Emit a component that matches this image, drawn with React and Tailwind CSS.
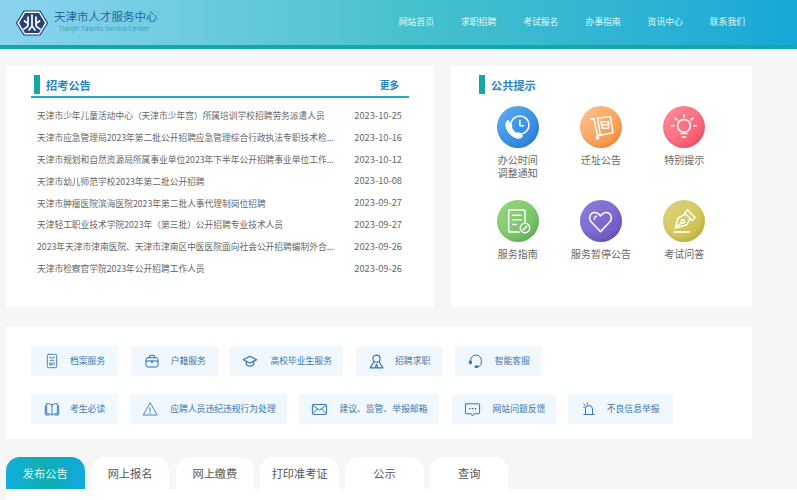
import React from "react";

const font = { fontFamily: '"Noto Sans CJK SC", "Noto Sans", sans-serif' };

const news = [
  ["天津市少年儿童活动中心（天津市少年宫）所属培训学校招聘劳务派遣人员", "2023-10-25"],
  ["天津市应急管理局2023年第二批公开招聘应急管理综合行政执法专职技术检...", "2023-10-16"],
  ["天津市规划和自然资源局所属事业单位2023年下半年公开招聘事业单位工作...", "2023-10-12"],
  ["天津市幼儿师范学校2023年第二批公开招聘", "2023-10-08"],
  ["天津市肿瘤医院滨海医院2023年第二批人事代理制岗位招聘", "2023-09-27"],
  ["天津轻工职业技术学院2023年（第三批）公开招聘专业技术人员", "2023-09-27"],
  ["2023年天津市津南医院、天津市津南区中医医院面向社会公开招聘编制外合...", "2023-09-26"],
  ["天津市检察官学院2023年公开招聘工作人员", "2023-09-26"],
];

const S = ({ children, size = 24, sw = 1.3, color = "white" }) => (
  <svg width={size} height={size} viewBox="0 0 24 24" fill="none" stroke={color} strokeWidth={sw} strokeLinecap="round" strokeLinejoin="round">
    {children}
  </svg>
);

const tips = [
  {
    label: ["办公时间", "调整通知"],
    bg: "bg-linear-to-br from-[#62b2ef] via-[#3f94e5] to-[#2a80e0]",
    icon: (
      <S size={29}>
        <circle cx="14" cy="10" r="7.500" />
        <path d="M14 6v4.500h3" />
        <path d="M4 6.500c-1.800 1.600-1.800 4-.6 6.700 1.700 3.500 4.700 6.300 7.900 7.300 2 .6 3.500 0 4.500-1.500l-3-2.500-1.800 1c-2.200-1-4-3-4.800-5.200l1-1.800z" fill="white" />
      </S>
    ),
  },
  {
    label: ["迁址公告"],
    bg: "bg-linear-to-br from-[#fcc493] via-[#fca865] to-[#fb8c2c]",
    icon: (
      <S size={28}>
        <path d="M3 5h3l3 14h3" />
        <path d="M9 4.500 20 3l2.200 14L11.500 19z" />
        <path d="M12 7.500h6.500v5.500H13zM13 10h5.500" />
        <circle cx="9" cy="21" r="1" />
      </S>
    ),
  },
  {
    label: ["特别提示"],
    bg: "bg-linear-to-br from-[#fb8c9a] via-[#fb7284] to-[#fa4560]",
    icon: (
      <S size={28}>
        <circle cx="12" cy="11" r="5.500" />
        <path d="M9.500 17.500h5M10.500 20.500h3M12 1.500v2M4.500 4.500l1.500 1.500M19.500 4.500 18 6M1.500 11h2M20.500 11h2" />
      </S>
    ),
  },
  {
    label: ["服务指南"],
    bg: "bg-linear-to-br from-[#95d67e] via-[#82cb6e] to-[#5fb25a]",
    icon: (
      <S size={28}>
        <path d="M13 21.500H5a1 1 0 0 1-1-1V3.500a1 1 0 0 1 1-1h12a1 1 0 0 1 1 1v9" />
        <path d="M7.500 7h7M7.500 11h7M7.500 15h3" />
        <circle cx="18" cy="18" r="4" />
        <path d="M16.500 19.500l3-3" />
      </S>
    ),
  },
  {
    label: ["服务暂停公告"],
    bg: "bg-linear-to-br from-[#8e7ddc] via-[#7e6cd2] to-[#6a4cb6]",
    icon: (
      <S size={27}>
        <path d="M12 21 3.800 12.500C1 9.500 2.500 4 7 4c2.500 0 3.800 1.500 5 3 1.200-1.500 2.500-3 5-3 4.500 0 6 5.500 3.200 8.500z" />
        <path d="M6.500 10c0-1.500.8-2.500 2-2.800" />
      </S>
    ),
  },
  {
    label: ["考试问答"],
    bg: "bg-linear-to-br from-[#dcd27e] via-[#d6ca62] to-[#c6b62c]",
    icon: (
      <S size={28}>
        <path d="M15 2.500 21.500 9 19 11.500 12.500 5z" />
        <path d="M13.500 6 7 9.500 4.500 18l9.500-2.500L17.500 10" />
        <circle cx="11" cy="12.500" r="1.500" />
        <path d="M5 17.500 10 13.500M3.500 21.500h13" />
      </S>
    ),
  },
];

const B = "#2f75b5";
const services = [
  [
    { t: "档案服务", w: "w-[87px]", pl: "pl-[13px]", gap: "gap-[10px]", i: <S size={16} color={B} sw={1.3}><rect x="5" y="2" width="14" height="20" rx="1.500" /><path d="M8 6l4 2 4-2M9 11h6M9 15h3v3H9zM15 14v4" /></S> },
    { t: "户籍服务", w: "w-[87px]", pl: "pl-[13px]", gap: "gap-[11px]", i: <S size={16} color={B} sw={1.5}><rect x="3" y="7" width="18" height="14" rx="3" /><path d="M8.500 7V3.500h7V7M3 12h18M11 12v2h2v-2" /></S> },
    { t: "高校毕业生服务", w: "w-[113px]", pl: "pl-[12px]", gap: "gap-[12px]", i: <S size={16} color={B} sw={1.8}><path d="M12 5 2 10l10 5 10-5zM6.500 13v4.500c3 3 8 3 11 0V13" /></S> },
    { t: "招聘求职", w: "w-[86px]", pl: "pl-[12px]", gap: "gap-[10px]", i: <S size={17} color={B} sw={1.6}><circle cx="12" cy="8" r="5" /><path d="M8 13 3 21h18l-5-8M10 21l2-5 2 5" /></S> },
    { t: "智能客服", w: "w-[87px]", pl: "pl-[13px]", gap: "gap-[11px]", i: <S size={16} color={B} sw={1.5}><path d="M4 13V11a8 8 0 0 1 16 0v4c0 3-2 5-5.500 5.500" /><rect x="2.500" y="12" width="2.500" height="4" fill={B} /><rect x="11" y="19.500" width="4" height="2" fill={B} /></S> },
  ],
  [
    { t: "考生必读", w: "w-[87px]", pl: "pl-[13px]", gap: "gap-[10px]", i: <S size={16} color={B} sw={1.4}><path d="M12 6C10 4 7 4 4 4v15c3 0 6 0 8 2 2-2 5-2 8-2V4c-3 0-6 0-8 2zM12 6v15M2 7v14h6M22 7v14h-6" /></S> },
    { t: "应聘人员违纪违规行为处理", w: "w-[157px]", pl: "pl-[12px]", gap: "gap-[12px]", i: <S size={16} color={B} sw={1.3}><path d="M12 3 2 21h20zM12 10v6M12 18v.500" /></S> },
    { t: "建议、监管、举报邮箱", w: "w-[140px]", pl: "pl-[12px]", gap: "gap-[11px]", i: <S size={17} color={B} sw={1.4}><rect x="2" y="5" width="20" height="14" rx="1.500" /><path d="m2.500 6 9.500 7 9.500-7M2.500 18l6.500-7M21.500 18 15 11" /></S> },
    { t: "网站问题反馈", w: "w-[104px]", pl: "pl-[12px]", gap: "gap-[12px]", i: <S size={17} color={B} sw={1.4}><path d="M3 4h18a1 1 0 0 1 1 1v12a1 1 0 0 1-1 1h-7l-2 3-2-3H3a1 1 0 0 1-1-1V5a1 1 0 0 1 1-1z" /><path d="M8 11h.500M12 11h.500M16 11h.500" strokeWidth="2" /></S> },
    { t: "不良信息举报", w: "w-[105px]", pl: "pl-[14px]", gap: "gap-[11px]", i: <S size={14} color={B} sw={1.7}><path d="M6 20v-8a6 6 0 0 1 12 0v8M3 21.500h18M3 3l2.500 3M9 1.500V4M3 9h2" /></S> },
  ],
];

const tabs = ["发布公告", "网上报名", "网上缴费", "打印准考证", "公示", "查询"];
const nav = ["网站首页", "求职招聘", "考试报名", "办事指南", "资讯中心", "联系我们"];

const Heading = ({ children }) => (
  <div className="flex items-center gap-[6px] h-[19px] ml-[3px]">
    <span className="w-[6px] h-[19px] bg-[#12a8a6]" />
    <span className="text-[11.200px] leading-none font-bold text-[#2a84bd] pt-[2px]">{children}</span>
  </div>
);

export default function App() {
  return (
    <div style={font} className="w-[797px] h-[500px] overflow-hidden bg-[#f6f6f6]">
      <header className="h-[49px] border-b-[4px] border-[#11a9a5] bg-linear-to-r from-[#8ad3ef] via-[#47c2cc] to-[#14a8d6] flex items-center justify-between pl-[16px] pr-[52px]">
        <div className="flex items-center gap-[6px]">
          <svg width="32" height="26" viewBox="0 0 32 26">
            <path d="M8 1h16l7.500 12L24 25H8L.5 13z" fill="white" stroke="#22406f" strokeWidth="1.200" />
            <path d="M9 3h14l6 10-6 10H9L3 13z" fill="#27447a" />
            <path d="M16 5v11M12 7v8c0 2-2 3-4 4M20 7v8c0 2 2 3 4 4M16 16l-3 4M16 16l3 4M8.500 11l2 1.500M23.500 11l-2 1.500" stroke="white" strokeWidth="1.700" fill="none" strokeLinecap="round" />
          </svg>
          <div className="flex flex-col -mt-[4px]">
            <span className="text-[11.500px] leading-[15px] text-[#1e6aa3] whitespace-nowrap">天津市人才服务中心</span>
            <span className="ml-[5px] text-[6.600px] leading-[9px] font-medium text-[#2aa3c4] whitespace-nowrap" style={{ fontFamily: '"Open Sans", sans-serif' }}>Tianjin Talents Service Center</span>
          </div>
        </div>
        <nav className="flex gap-[27px] text-[8.800px] leading-none text-[#e3f6f8]">
          {nav.map((n) => (
            <span key={n} className="whitespace-nowrap">{n}</span>
          ))}
        </nav>
      </header>

      <div className="flex gap-[17px] pl-[6px] pt-[17px]">
        <section className="w-[428px] h-[241px] bg-white pt-[9px] pl-[25px]">
          <div className="w-[378px] h-[23px] border-b-[2px] border-[#22acc4] flex justify-between pr-[10px]">
            <Heading>招考公告</Heading>
            <span className="text-[9.700px] leading-[20px] font-bold text-[#2a84bd]">更多</span>
          </div>
          <ul className="w-[378px] mt-[7px] pl-[6px] pr-[7px]">
            {news.map(([t, d], i) => (
              <li key={i} className="h-[21.800px] flex items-center justify-between">
                <span className="text-[8.730px] text-[#666666] whitespace-nowrap">{t}</span>
                <span className="text-[9.300px] text-[#666666]">{d}</span>
              </li>
            ))}
          </ul>
        </section>
        <section className="w-[301px] h-[241px] bg-white pt-[9px] pl-[25px]">
          <Heading>公共提示</Heading>
          <div className="grid grid-cols-[83.300px_83.300px_83.300px] grid-rows-[94px_94px] mt-[12px]">
            {tips.map((x) => (
              <div key={x.label[0]} className="flex flex-col items-center">
                <div className={`w-[42px] h-[42px] rounded-full flex items-center justify-center shadow-[inset_-1px_-3px_4px_rgba(0,0,0,0.08)] ${x.bg}`}>{x.icon}</div>
                <div className="mt-[5px] text-[10px] leading-[13px] text-center text-[#666666] whitespace-nowrap">
                  {x.label.map((l) => (
                    <div key={l}>{l}</div>
                  ))}
                </div>
              </div>
            ))}
          </div>
        </section>
      </div>

      <section className="ml-[6px] mt-[20px] w-[746px] h-[112px] bg-white pl-[25px] pt-[19px] flex flex-col gap-[18px]">
        {services.map((row, ri) => (
          <div key={ri} className={`flex ${ri === 0 ? "gap-[12.700px]" : "gap-[12.200px]"}`}>
            {row.map((s) => (
              <div key={s.t} className={`${s.w} ${s.pl} ${s.gap} h-[30px] bg-[#f0f7fd] flex items-center`}>
                <span className="shrink-0 flex items-center">{s.i}</span>
                <span className="text-[8.800px] text-[#3f78ac] whitespace-nowrap">{s.t}</span>
              </div>
            ))}
          </div>
        ))}
      </section>

      <div className="ml-[6px] mt-[18px] flex gap-[6.300px]">
        {tabs.map((t, i) => (
          <div key={t} className={`w-[78.500px] h-[32px] rounded-t-[14px] flex items-center justify-center text-[11.200px] ${i === 0 ? "bg-linear-to-r from-[#12aede] via-[#11aeb0] to-[#12a8de] text-[#e8f8fb]" : "bg-white text-[#555555]"}`}>
            {t}
          </div>
        ))}
      </div>
      <div className="ml-[6px] h-[11px] bg-white" />
    </div>
  );
}
